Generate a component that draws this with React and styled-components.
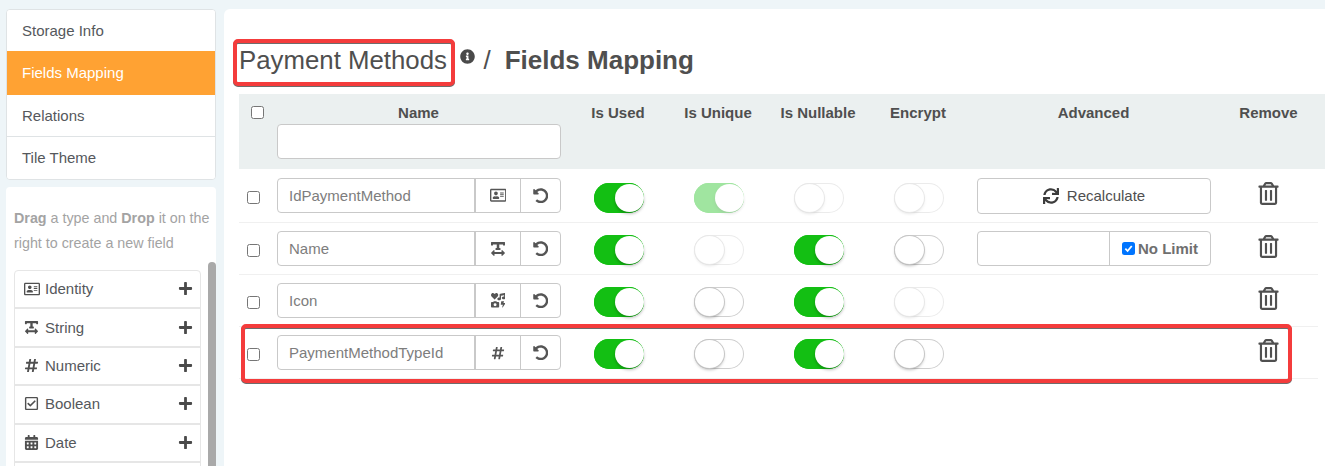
import React from 'react';
import styled, { createGlobalStyle } from 'styled-components';
import {
  FaRegAddressCard, FaTextWidth, FaHashtag, FaRegCheckSquare, FaCalendarAlt, FaPlus,
  FaInfoCircle, FaIcons, FaUndoAlt, FaRegTrashAlt, FaSync,
} from 'react-icons/fa';

const GlobalStyle = createGlobalStyle`
  html, body {
    margin: 0;
    height: 466px;
    overflow: hidden;
    background: #eef5f8;
    font-family: "Liberation Sans", Arial, sans-serif;
    color: #4f4f4f;
  }
  * { box-sizing: border-box; }
`;

const Page = styled.div`
  display: flex;
  gap: 8px;
  height: 466px;
  padding: 9px 0 0 6px;
  overflow: hidden;
`;

const Side = styled.aside`
  width: 210px;
  flex: none;
  display: flex;
  flex-direction: column;
  gap: 7px;
`;

const Nav = styled.nav`
  background: #fff;
  border: 1px solid #dfe3e5;
  border-radius: 4px;
  overflow: hidden;
  height: 171px;
`;

const NavItem = styled.div`
  display: flex;
  align-items: center;
  height: ${p => p.$h}px;
  padding: 0 0 1px 15px;
  font-size: 15px;
  background: ${p => (p.$active ? '#ffa233' : '#fff')};
  color: ${p => (p.$active ? '#fff' : '#55585c')};
  border-bottom: ${p => (p.$line ? '1px solid #dfe3e5' : 'none')};
`;

const Palette = styled.div`
  position: relative;
  flex: 1;
  background: #fff;
  border-radius: 4px 4px 0 0;
  padding: 19px 15px 0 8px;
  overflow: hidden;
`;

const Hint = styled.p`
  margin: 0 0 14px;
  font-size: 14.3px;
  line-height: 25px;
  color: #a3a3a3;
  white-space: nowrap;
  b { font-weight: 700; }
`;

const TypeList = styled.div`
  border: 1px solid #e6e6e6;
  border-radius: 4px 4px 0 0;
`;

const TypeItem = styled.div`
  display: flex;
  align-items: center;
  height: 38.4px;
  padding: 0 7px 1px 8px;
  border-bottom: 2px solid #e6e6e6;
  font-size: 15px;
  color: #55585c;
`;

const TypeIcon = styled.span`
  width: 17px;
  display: flex;
  justify-content: center;
  margin-right: 5px;
  color: #505050;
`;

const TypeName = styled.span`
  flex: 1;
`;

const Scrollbar = styled.div`
  position: absolute;
  right: 0;
  top: 75px;
  bottom: 0;
  width: 8px;
  background: #a9a9a9;
  border-radius: 4px 4px 0 0;
`;

const Main = styled.main`
  position: relative;
  flex: 1;
  background: #fff;
  border-radius: 6px 0 0 0;
  padding: 0 0 0 15px;
`;

const TitleRow = styled.header`
  display: flex;
  align-items: center;
  height: 85px;
  padding-top: 18px;
`;

const Title = styled.h1`
  margin: 0;
  font-size: 25.8px;
  font-weight: 400;
  color: #4f4f4f;
  white-space: nowrap;
`;

const Info = styled.span`
  display: flex;
  margin: -9px 8px 0 13.5px;
  font-size: 15px;
  color: #4a4a4a;
`;

const Slash = styled.span`
  font-size: 26px;
  margin-right: 14px;
`;

const Crumb = styled.h2`
  margin: 0;
  font-size: 26px;
  font-weight: 700;
  color: #4f4f4f;
  white-space: nowrap;
`;

const columns = '38px 291px 100px 100px 100px 100px 251px 99px';

const HeadRow = styled.div`
  display: grid;
  grid-template-columns: ${columns};
  height: 75px;
  background: #ebf0f0;
  font-size: 15px;
  font-weight: 700;
  color: #4f4f4f;
  padding-top: 11px;
`;

const HeadCell = styled.div`
  text-align: center;
  line-height: 16px;
`;

const NameHead = styled.div`
  padding-right: 8px;
  text-align: center;
  line-height: 16px;
`;

const NameFilter = styled.input`
  display: block;
  width: 284px;
  height: 35px;
  margin-top: 3px;
  border: 1px solid #c9c9c9;
  border-radius: 4px;
  background: #fff;
`;

const Row = styled.div`
  display: grid;
  grid-template-columns: ${columns};
  width: 1079px;
  height: ${p => (p.$first ? 54 : 52)}px;
  padding-top: ${p => (p.$first ? 9 : 8)}px;
  border-bottom: 1px solid #f0f0f0;
`;

const CheckCell = styled.div`
  display: flex;
  padding: ${p => (p.$head ? '1px 0 0 12px' : '13px 0 0 8px')};
`;

const Box = styled.span`
  display: block;
  width: 13px;
  height: 13px;
  border: 1px solid #767676;
  border-radius: 2.5px;
  background: #fff;
`;

const FieldGroup = styled.div`
  display: flex;
  width: 284px;
  height: 35px;
  border: 1px solid #c9c9c9;
  border-radius: 4px;
  background: #fff;
`;

const FieldName = styled.div`
  display: flex;
  align-items: center;
  width: 198px;
  padding-left: 11px;
  font-size: 15px;
  color: #7d7d7d;
  border-right: 2px solid #c9c9c9;
`;

const FieldType = styled.div`
  display: flex;
  align-items: center;
  justify-content: center;
  width: 45px;
  color: #555;
  border-right: 1px solid #c9c9c9;
`;

const FieldReset = styled.div`
  flex: 1;
  display: flex;
  align-items: center;
  justify-content: center;
  font-size: 15.5px;
  color: #555;
`;

const ToggleCell = styled.div`
  display: flex;
  justify-content: center;
  padding: ${p => (p.$first ? 5 : 4)}px 0 0 2px;
`;

const Track = styled.span`
  position: relative;
  display: block;
  width: 50px;
  height: 30px;
  border-radius: 15px;
  background: ${p => (p.$on ? '#13bf13' : '#fff')};
  box-shadow: inset 0 0 0 1px ${p => (p.$on ? '#13bf13' : '#cfcfcf')};
  opacity: ${p => (p.$disabled ? 0.4 : 1)};
`;

const Knob = styled.span`
  position: absolute;
  top: 1px;
  left: ${p => (p.$on ? '20.5px' : '0.5px')};
  width: 29px;
  height: 28px;
  border-radius: 50%;
  background: #fff;
  box-shadow: ${p => (p.$on
    ? '0 2px 3px rgba(0, 0, 0, 0.25)'
    : '0 0 0 1px #c6c6c6, 0 2px 3px rgba(0, 0, 0, 0.25)')};
`;

const AdvancedCell = styled.div`
  padding-left: 9px;
`;

const RecalcButton = styled.div`
  display: flex;
  align-items: center;
  justify-content: center;
  gap: 8px;
  width: 234px;
  height: 36px;
  padding-bottom: 1px;
  border: 1px solid #c9c9c9;
  border-radius: 4px;
  font-size: 15px;
  color: #4f4f4f;
`;

const LimitGroup = styled.div`
  display: flex;
  width: 234px;
  height: 35px;
  border: 1px solid #c9c9c9;
  border-radius: 4px;
`;

const LimitInput = styled.div`
  width: 132px;
  border-right: 1px solid #c9c9c9;
`;

const LimitLabel = styled.div`
  flex: 1;
  display: flex;
  align-items: center;
  justify-content: center;
  gap: 3px;
  font-size: 15px;
  font-weight: 700;
  color: #6f6f6f;
`;

const BlueCheck = styled.span`
  display: flex;
  align-items: center;
  justify-content: center;
  width: 13px;
  height: 13px;
  border-radius: 2.5px;
  background: #0075ff;
`;

const RemoveCell = styled.div`
  display: flex;
  justify-content: center;
  padding-top: 4px;
  font-size: 23px;
  color: #505050;
`;

const Highlight = styled.div`
  position: absolute;
  left: ${p => p.$x}px;
  top: ${p => p.$y}px;
  width: ${p => p.$w}px;
  height: ${p => p.$h}px;
  border: 4px solid #f43c3c;
  border-radius: 5px;
  filter: drop-shadow(0 1px 0.5px rgba(60, 60, 60, 0.75));
  pointer-events: none;
`;

const types = [
  ['Identity', FaRegAddressCard, 16],
  ['String', FaTextWidth, 15],
  ['Numeric', FaHashtag, 15],
  ['Boolean', FaRegCheckSquare, 15],
  ['Date', FaCalendarAlt, 15],
];

const fields = [
  { name: 'IdPaymentMethod', icon: FaRegAddressCard, iconSize: 16.5, toggles: ['on', 'on-dis', 'dis', 'dis'], advanced: 'recalc' },
  { name: 'Name', icon: FaTextWidth, iconSize: 16, toggles: ['on', 'dis', 'on', 'off'], advanced: 'limit' },
  { name: 'Icon', icon: FaIcons, iconSize: 14.5, toggles: ['on', 'off', 'on', 'dis'] },
  { name: 'PaymentMethodTypeId', icon: FaHashtag, iconSize: 14, toggles: ['on', 'off', 'on', 'off'] },
];

function Toggle({ state, first }) {
  const on = state.startsWith('on');
  return (
    <ToggleCell $first={first}>
      <Track $on={on} $disabled={state.endsWith('dis')}>
        <Knob $on={on} />
      </Track>
    </ToggleCell>
  );
}

function Advanced({ kind }) {
  if (kind === 'recalc') {
    return (
      <AdvancedCell>
        <RecalcButton><FaSync size={16} color="#3c3c3c" />Recalculate</RecalcButton>
      </AdvancedCell>
    );
  }
  if (kind === 'limit') {
    return (
      <AdvancedCell>
        <LimitGroup>
          <LimitInput />
          <LimitLabel>
            <BlueCheck>
              <svg width="9" height="9" viewBox="0 0 10 10">
                <path d="M1.5 5.2 4 7.8 8.6 2.2" fill="none" stroke="#fff" strokeWidth="2" />
              </svg>
            </BlueCheck>
            No Limit
          </LimitLabel>
        </LimitGroup>
      </AdvancedCell>
    );
  }
  return <AdvancedCell />;
}

export default function App() {
  return (
    <>
      <GlobalStyle />
      <Page>
        <Side>
          <Nav>
            <NavItem $h={41}>Storage Info</NavItem>
            <NavItem $h={44} $active>Fields Mapping</NavItem>
            <NavItem $h={42} $line>Relations</NavItem>
            <NavItem $h={42}>Tile Theme</NavItem>
          </Nav>
          <Palette>
            <Hint><b>Drag</b> a type and <b>Drop</b> it on the<br />right to create a new field</Hint>
            <TypeList>
              {types.map(([label, Icon, size]) => (
                <TypeItem key={label}>
                  <TypeIcon><Icon size={size} /></TypeIcon>
                  <TypeName>{label}</TypeName>
                  <FaPlus size={15} color="#4a4a4a" />
                </TypeItem>
              ))}
              <TypeItem />
            </TypeList>
            <Scrollbar />
          </Palette>
        </Side>
        <Main>
          <TitleRow>
            <Title>Payment Methods</Title>
            <Info><FaInfoCircle /></Info>
            <Slash>/</Slash>
            <Crumb>Fields Mapping</Crumb>
          </TitleRow>
          <HeadRow>
            <CheckCell $head><Box /></CheckCell>
            <NameHead>
              Name
              <NameFilter />
            </NameHead>
            <HeadCell>Is Used</HeadCell>
            <HeadCell>Is Unique</HeadCell>
            <HeadCell>Is Nullable</HeadCell>
            <HeadCell>Encrypt</HeadCell>
            <HeadCell>Advanced</HeadCell>
            <HeadCell>Remove</HeadCell>
          </HeadRow>
          {fields.map((f, i) => (
            <Row key={f.name} $first={i === 0}>
              <CheckCell><Box /></CheckCell>
              <FieldGroup>
                <FieldName>{f.name}</FieldName>
                <FieldType><f.icon size={f.iconSize} /></FieldType>
                <FieldReset><FaUndoAlt /></FieldReset>
              </FieldGroup>
              {f.toggles.map((t, j) => <Toggle key={j} state={t} first={i === 0} />)}
              <Advanced kind={f.advanced} />
              <RemoveCell><FaRegTrashAlt /></RemoveCell>
            </Row>
          ))}
          <Highlight $x={9} $y={30} $w={222} $h={47} />
          <Highlight $x={17} $y={315} $w={1051} $h={59} />
        </Main>
      </Page>
    </>
  );
}
